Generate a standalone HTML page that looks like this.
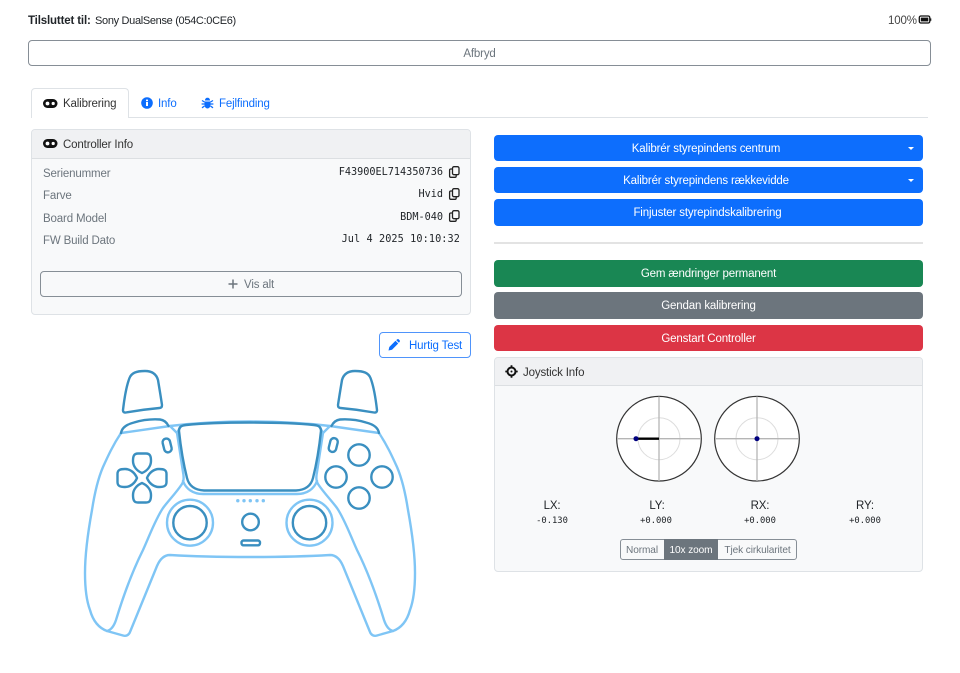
<!DOCTYPE html>
<html lang="da"><head><meta charset="utf-8"><title>DualSense</title>
<style>
html,body{margin:0;padding:0;background:#fff;width:960px;height:673px;overflow:hidden}
body{font-family:"Liberation Sans",sans-serif;font-size:11.5px;letter-spacing:-.15px;color:#212529;position:relative}
.a{position:absolute;white-space:nowrap;line-height:16px;margin-top:1px}
.box{position:absolute;box-sizing:border-box;border-radius:4px}
.btn{position:absolute;box-sizing:border-box;border-radius:4px;text-align:center;color:#fff;white-space:nowrap;font-size:11.5px;padding-top:1px}
.m{font-family:"DejaVu Sans Mono","Liberation Mono",monospace;font-size:10.2px;letter-spacing:0;color:#212529}
.s{font-size:8.8px}
.t{font-size:10.1px;letter-spacing:-.1px}
.g{color:#6c757d}
.blue{color:#0d6efd}
svg{position:absolute;overflow:visible}
.caret{position:absolute;width:0;height:0;border-left:3px solid transparent;border-right:3px solid transparent;border-top:3px solid #fff}
</style></head><body>

<div class="a" style="left:28px;top:12px"><b>Tilsluttet til:</b></div>
<div class="a" style="left:95px;top:12px;font-size:11px;letter-spacing:-.32px">Sony DualSense (054C:0CE6)</div>
<div class="a" style="left:888px;top:12px;color:#444">100%</div>
<svg style="left:918px;top:15px" width="14" height="10" viewBox="0 0 14 10"><rect x="1.300" y="1" width="10.500" height="7" rx="1.600" fill="none" stroke="#111" stroke-width="1.300"/><rect x="2.800" y="2.600" width="7.500" height="3.800" fill="#111"/><rect x="12.300" y="3.400" width="1" height="2.400" fill="#111"/></svg>

<div class="btn" style="left:28px;top:40px;width:903px;height:26px;border:1px solid #868e96;color:#6c757d;line-height:25px">Afbryd</div>

<!-- tabs -->
<div style="position:absolute;left:31px;top:117px;width:897px;height:1px;background:#dee2e6"></div>
<div class="box" style="left:31px;top:88px;width:98px;height:30px;border:1px solid #dee2e6;border-bottom:0;background:#fff;border-radius:4px 4px 0 0"></div>
<svg style="left:43px;top:98px" width="15" height="11" viewBox="0 0 15 11"><rect x="0" y="1" width="14.500" height="9" rx="4.500" fill="#111"/><circle cx="4.500" cy="5.500" r="1.900" fill="#fff"/><circle cx="10.200" cy="5.500" r="1.600" fill="#fff"/></svg>
<div class="a" style="left:63px;top:95px;color:#333">Kalibrering</div>
<svg style="left:141px;top:97px" width="12" height="12" viewBox="0 0 12 12"><circle cx="6" cy="6" r="5.800" fill="#0d6efd"/><rect x="5" y="5" width="2" height="4" fill="#fff"/><rect x="5" y="2.600" width="2" height="1.600" fill="#fff"/></svg>
<div class="a blue" style="left:158px;top:95px">Info</div>
<svg style="left:201px;top:97px" width="13" height="12" viewBox="0 0 13 12"><path d="M4 3.500C4 1.800 5 .8 6.500 .8S9 1.800 9 3.500ZM3.500 4.500H9.500V8C9.500 10 8 11.500 6.500 11.500S3.500 10 3.500 8Z" fill="#0d6efd"/><path d="M3.500 5 1 3.500M9.500 5 12 3.500M3.500 7H.6M9.500 7H12.400M3.500 9 1 10.800M9.500 9 12 10.800" stroke="#0d6efd" stroke-width="1.300" fill="none"/></svg>
<div class="a blue" style="left:219px;top:95px">Fejlfinding</div>

<!-- Controller Info card -->
<div class="box" style="left:31px;top:129px;width:440px;height:186px;background:#f8f9fa;border:1px solid #dee2e6"></div>
<div class="box" style="left:32px;top:130px;width:438px;height:29px;background:#f0f1f3;border-bottom:1px solid #dcdfe2;border-radius:3px 3px 0 0"></div>
<svg style="left:43px;top:138px" width="15" height="11" viewBox="0 0 15 11"><rect x="0" y="1" width="14.500" height="9" rx="4.500" fill="#111"/><circle cx="4.500" cy="5.500" r="1.900" fill="#fff"/><circle cx="10.200" cy="5.500" r="1.600" fill="#fff"/></svg>
<div class="a" style="left:63px;top:136px;color:#333">Controller Info</div>

<div class="a g" style="left:43px;top:165px">Serienummer</div>
<div class="a g" style="left:43px;top:187px">Farve</div>
<div class="a g" style="left:43px;top:210px">Board Model</div>
<div class="a g" style="left:43px;top:232px">FW Build Dato</div>
<div class="a m" style="right:517px;top:164px">F43900EL714350736</div>
<div class="a m" style="right:517px;top:186px">Hvid</div>
<div class="a m" style="right:517px;top:209px">BDM-040</div>
<div class="a m" style="right:500px;top:231px;letter-spacing:.1px">Jul 4 2025 10:10:32</div>
<svg style="left:449px;top:166px" width="11" height="12" viewBox="0 0 11 12"><rect x="3.500" y=".7" width="6.500" height="8" rx="1.500" fill="none" stroke="#222" stroke-width="1.300"/><path d="M3 3H1.800C1 3 .6 3.500 .6 4.200V10C.6 10.800 1 11.300 1.800 11.300H6C6.800 11.300 7.200 10.800 7.200 10V9" fill="none" stroke="#222" stroke-width="1.300"/></svg>
<svg style="left:449px;top:188px" width="11" height="12" viewBox="0 0 11 12"><rect x="3.500" y=".7" width="6.500" height="8" rx="1.500" fill="none" stroke="#222" stroke-width="1.300"/><path d="M3 3H1.800C1 3 .6 3.500 .6 4.200V10C.6 10.800 1 11.300 1.800 11.300H6C6.800 11.300 7.200 10.800 7.200 10V9" fill="none" stroke="#222" stroke-width="1.300"/></svg>
<svg style="left:449px;top:210px" width="11" height="12" viewBox="0 0 11 12"><rect x="3.500" y=".7" width="6.500" height="8" rx="1.500" fill="none" stroke="#222" stroke-width="1.300"/><path d="M3 3H1.800C1 3 .6 3.500 .6 4.200V10C.6 10.800 1 11.300 1.800 11.300H6C6.800 11.300 7.200 10.800 7.200 10V9" fill="none" stroke="#222" stroke-width="1.300"/></svg>

<div class="box" style="left:40px;top:271px;width:422px;height:26px;border:1px solid #868e96"></div>
<svg style="left:228px;top:279px" width="10" height="10" viewBox="0 0 10 10"><path d="M5 .5V9.500M.5 5H9.500" stroke="#6c757d" stroke-width="1.500"/></svg>
<div class="a g" style="left:244px;top:276px">Vis alt</div>

<div class="btn" style="left:379px;top:332px;width:92px;height:26px;border:1px solid #4f94fb;color:#0d6efd;line-height:25px;text-align:left;padding-left:29px">Hurtig Test</div>
<svg style="left:388px;top:339px" width="12" height="12" viewBox="0 0 12 12"><path d="M.5 11.500 1.300 8 7.500 1.800 10.200 4.500 4 10.700ZM8.200 1.100 9.300 .3C9.700 0 10.200 0 10.600 .3L11.700 1.400C12 1.800 12 2.300 11.700 2.700L10.900 3.800Z" fill="#0d6efd"/></svg>

<!-- controller -->
<svg style="left:0;top:0;filter:blur(.25px)" width="960" height="673" viewBox="0 0 960 673" fill="none" stroke-linecap="round" stroke-linejoin="round">
<g stroke="#7fc5f5" stroke-width="2.400">
<path d="M121 433C113 445 108 456 103 467C97 481 94 497 92 510C88 532 85 552 85 573C85 590 87 602 90 610C93 621 99 628 107 631L123 635.500C126 636.500 129 635 130 632L157 566C160 559 164 555 170 555C195 556.500 225 557 250 557C275 557 305 556.500 330 555C336 555 340 559 343 566L370 632C371 635 374 636.500 377 635.500L393 631C401 628 407 621 410 610C413 602 415 590 415 573C415 552 412 532 408 510C406 497 403 481 397 467C392 456 387 445 379 433"/>
<path d="M107 631C111 630 114 626 116 620C123 597 133 570 143 550C149 537 155 520 163 508C169 500 176 493 182 484C184 481 184 477 183 472L177 433L170 426L121 433"/>
<path d="M393 631C389 630 386 626 384 620C377 597 367 570 357 550C351 537 345 520 337 508C331 500 324 493 318 484C316 481 316 477 317 472L323 433L330 426L379 433"/>
<path d="M170 426C200 422.500 230 421.500 250 421.500C270 421.500 300 422.500 330 426"/>
<path d="M177 433 L181 426M323 433 L319 426"/>
<path d="M183 481C186 489 193 494 203 494H297C307 494 314 489 317 481"/>
<circle cx="190" cy="522.700" r="23"/>
<circle cx="309.500" cy="522.700" r="23"/>
</g>
<g fill="#7fc5f5"><circle cx="237.800" cy="500.700" r="1.700"/><circle cx="244" cy="500.700" r="1.700"/><circle cx="250.300" cy="500.700" r="1.700"/><circle cx="257" cy="500.700" r="1.700"/><circle cx="263.300" cy="500.700" r="1.700"/></g>
<g stroke="#3a8fc0" stroke-width="2.400">
<path d="M123 410C124.500 397 126 387 129.500 378C131.500 373 136 371 145 371C151 371 156 373 158 380C159.500 389 161 398 162 405C162 407 161 408 159.500 408C148 409 137 410.500 126 412.500C124 412.800 122.800 411.800 123 410Z"/>
<path d="M123 410C124.500 397 126 387 129.500 378C131.500 373 136 371 145 371C151 371 156 373 158 380C159.500 389 161 398 162 405C162 407 161 408 159.500 408C148 409 137 410.500 126 412.500C124 412.800 122.800 411.800 123 410Z" transform="translate(500 0) scale(-1 1)"/>
<path d="M121 433C122 427 128 424 134 422.500C142 420 152 419 160 419.500C164 420 167 423 168.500 426"/>
<path d="M379 433C378 427 372 424 366 422.500C358 420 348 419 340 419.500C336 420 333 423 331.500 426"/>
<path d="M179 431C179 427 181 425.500 186 425C205 423 230 422.500 250 422.500C270 422.500 295 423 314 425C319 425.500 321 427 321 431C319 450 316 466 313 478C311 486 305 490 296 490.500H204C195 490 189 486 187 478C184 466 181 450 179 431Z"/>
<rect x="163.500" y="438.500" width="7.500" height="14" rx="3.700" transform="rotate(-14 167 446)"/>
<rect x="329.500" y="438" width="7.500" height="14" rx="3.700" transform="rotate(14 333 445)"/>
<path d="M142 473C137 471 133 466.500 133 461C133 456 134 453.500 138 453.500H146C150 453.500 151 456 151 461C151 466.500 147 471 142 473Z"/>
<path d="M142 473C137 471 133 466.500 133 461C133 456 134 453.500 138 453.500H146C150 453.500 151 456 151 461C151 466.500 147 471 142 473Z" transform="rotate(90 142 478)"/>
<path d="M142 473C137 471 133 466.500 133 461C133 456 134 453.500 138 453.500H146C150 453.500 151 456 151 461C151 466.500 147 471 142 473Z" transform="rotate(180 142 478)"/>
<path d="M142 473C137 471 133 466.500 133 461C133 456 134 453.500 138 453.500H146C150 453.500 151 456 151 461C151 466.500 147 471 142 473Z" transform="rotate(270 142 478)"/>
<circle cx="359" cy="455" r="10.700"/><circle cx="336" cy="477" r="10.700"/><circle cx="382" cy="477" r="10.700"/><circle cx="359" cy="498" r="10.700"/>
<circle cx="190" cy="522.700" r="16.700"/>
<circle cx="309.500" cy="522.700" r="16.700"/>
<circle cx="250.500" cy="522" r="8.300"/>
<rect x="241.500" y="540.500" width="18.500" height="4.800" rx="2"/>
</g>
</svg>

<!-- right buttons -->
<div class="btn" style="left:494px;top:135px;width:429px;height:26px;background:#0d6efd;line-height:26px;padding-right:5px">Kalibrér styrepindens centrum</div>
<div class="caret" style="left:908px;top:147px"></div>
<div class="btn" style="left:494px;top:167px;width:429px;height:26px;background:#0d6efd;line-height:26px;padding-right:5px">Kalibrér styrepindens rækkevidde</div>
<div class="caret" style="left:908px;top:179px"></div>
<div class="btn" style="left:494px;top:199px;width:429px;height:27px;background:#0d6efd;line-height:27px;padding-right:2px">Finjuster styrepindskalibrering</div>
<div style="position:absolute;left:494px;top:242px;width:429px;height:2px;background:#e3e3e3"></div>
<div class="btn" style="left:494px;top:260px;width:429px;height:27px;background:#198754;line-height:27px">Gem ændringer permanent</div>
<div class="btn" style="left:494px;top:292px;width:429px;height:27px;background:#6c757d;line-height:27px">Gendan kalibrering</div>
<div class="btn" style="left:494px;top:325px;width:429px;height:26px;background:#dc3545;line-height:26px">Genstart Controller</div>

<!-- joystick card -->
<div class="box" style="left:494px;top:357px;width:429px;height:215px;background:#f8f9fa;border:1px solid #dee2e6"></div>
<div class="box" style="left:495px;top:358px;width:427px;height:28px;background:#f0f1f3;border-bottom:1px solid #dcdfe2;border-radius:3px 3px 0 0"></div>
<svg style="left:505px;top:365px" width="13" height="13" viewBox="0 0 13 13"><circle cx="6.500" cy="6.500" r="4" fill="none" stroke="#111" stroke-width="2"/><path d="M6.500 .3V3.500M6.500 9.500V12.700M.3 6.500H3.500M9.500 6.500H12.700" stroke="#111" stroke-width="1.800"/><circle cx="6.500" cy="6.500" r="1" fill="#111"/></svg>
<div class="a" style="left:523px;top:364px;color:#333">Joystick Info</div>

<svg style="left:0;top:0" width="960" height="673" viewBox="0 0 960 673">
<g>
<circle cx="659" cy="438.700" r="42.300" fill="#fff" stroke="#333" stroke-width="1.200"/>
<circle cx="659" cy="438.700" r="21" fill="none" stroke="#ddd" stroke-width="1"/>
<path d="M659 396.500V481M617 438.700H701" stroke="#b5b5b5" stroke-width="1.300"/>
<path d="M636 438.700H659" stroke="#000" stroke-width="2.400"/>
<circle cx="636" cy="438.700" r="2.500" fill="#00007f"/>
</g>
<g>
<circle cx="757" cy="438.700" r="42.300" fill="#fff" stroke="#333" stroke-width="1.200"/>
<circle cx="757" cy="438.700" r="21" fill="none" stroke="#ddd" stroke-width="1"/>
<path d="M757 396.500V481M715 438.700H799" stroke="#b5b5b5" stroke-width="1.300"/>
<circle cx="757" cy="438.700" r="2.500" fill="#00007f"/>
</g>
</svg>

<div class="a" style="left:512px;width:80px;text-align:center;top:497px">LX:</div>
<div class="a" style="left:617px;width:80px;text-align:center;top:497px">LY:</div>
<div class="a" style="left:720px;width:80px;text-align:center;top:497px">RX:</div>
<div class="a" style="left:825px;width:80px;text-align:center;top:497px">RY:</div>
<div class="a m s" style="left:512px;width:80px;text-align:center;top:512px">-0.130</div>
<div class="a m s" style="left:616px;width:80px;text-align:center;top:512px">+0.000</div>
<div class="a m s" style="left:720px;width:80px;text-align:center;top:512px">+0.000</div>
<div class="a m s" style="left:825px;width:80px;text-align:center;top:512px">+0.000</div>

<div class="box" style="left:620px;top:539px;width:177px;height:21px;border:1px solid #868e96;border-radius:3px"></div>
<div class="a g t" style="left:620px;width:44px;text-align:center;top:542px">Normal</div>
<div style="position:absolute;left:664px;top:539px;width:54px;height:21px;background:#6c757d"></div>
<div class="a t" style="left:664px;width:54px;text-align:center;top:542px;color:#fff">10x zoom</div>
<div class="a g t" style="left:718px;width:79px;text-align:center;top:542px">Tjek cirkularitet</div>

</body></html>
